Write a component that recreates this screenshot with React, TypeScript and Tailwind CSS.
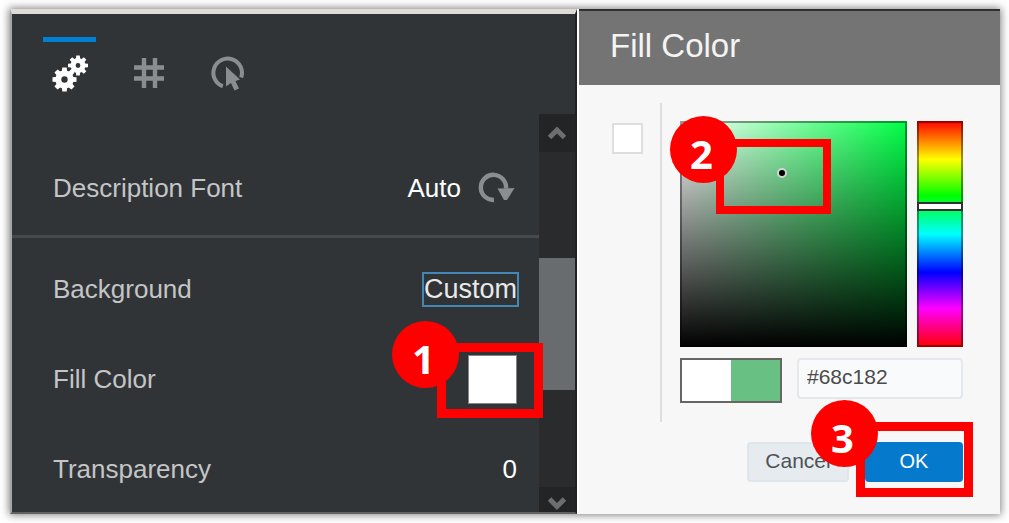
import type { ReactNode } from "react";

const TEETH = [0, 45, 90, 135, 180, 225, 270, 315];

function Gear({ x, y, body, outer, tooth, hole }: { x: number; y: number; body: number; outer: number; tooth: number; hole: number }) {
  return (
    <g transform={`translate(${x} ${y})`}>
      <circle r={(body + hole) / 2} fill="none" stroke="currentColor" strokeWidth={body - hole} />
      {TEETH.map((angle) => (
        <path
          key={angle}
          transform={`rotate(${angle})`}
          d={`M${-tooth} ${-body + 1}L${-tooth * 0.85} ${-outer}H${tooth * 0.85}L${tooth} ${-body + 1}Z`}
          fill="currentColor"
        />
      ))}
    </g>
  );
}

function GearsIcon() {
  return (
    <svg viewBox="0 0 36 38" className="h-[38px] w-9" aria-hidden="true">
      <Gear x={12.5} y={24.5} body={9.2} outer={12} tooth={2.6} hole={3.2} />
      <Gear x={26} y={10.5} body={7.4} outer={10} tooth={2.1} hole={2.4} />
    </svg>
  );
}

function HashIcon() {
  return (
    <svg viewBox="0 0 32 32" className="size-8" fill="none" stroke="currentColor" strokeWidth="4.4" aria-hidden="true">
      <path d="M11 1V31M22 1V31M1 10.5H31M1 21.5H31" />
    </svg>
  );
}

function PointerIcon() {
  return (
    <svg viewBox="0 0 36 38" className="h-[38px] w-9" aria-hidden="true">
      <path d="M12.8 32.3A14.3 14.3 0 1 1 31.2 23.5" fill="none" stroke="currentColor" strokeWidth="4" />
      <path d="M16 12.5L30 25.5L25.5 27L29 34.5L24.5 36.5L21 29L16 32.5Z" fill="currentColor" />
    </svg>
  );
}

function ResetIcon() {
  return (
    <svg viewBox="0 0 38 32" className="h-8 w-[38px]" aria-hidden="true">
      <path d="M17 28A12.6 12.6 0 1 1 29 16.5" fill="none" stroke="currentColor" strokeWidth="4.4" />
      <path d="M20.5 16.5L37.5 16L30 28H27Z" fill="currentColor" />
    </svg>
  );
}

function Chevron({ down = false }: { down?: boolean }) {
  return (
    <svg viewBox="0 0 18 16" className="h-4 w-[18px]" fill="none" stroke="currentColor" strokeWidth="5" aria-hidden="true">
      <path d={down ? "M1.5 3L9 10.5L16.5 3" : "M1.5 12.5L9 5L16.5 12.5"} />
    </svg>
  );
}

function StepBadge({ children, className }: { children: ReactNode; className: string }) {
  return (
    <span
      className={`pointer-events-none absolute flex size-[67px] items-center justify-center rounded-full bg-[#ff0000] pt-2 pr-1 font-['Noto_Sans',sans-serif] text-[40px] leading-[51px] font-bold text-white ${className}`}
    >
      {children}
    </span>
  );
}

function Row({ label, children }: { label: string; children: ReactNode }) {
  return (
    <div className="flex h-[90px] items-center justify-between pr-5 pl-[41px]">
      <span className="text-[26px] leading-8 text-[#c4c5c6]">{label}</span>
      {children}
    </div>
  );
}

function PropertiesPanel() {
  return (
    <section className="flex flex-col border-x-2 border-t-[5px] border-b-2 border-t-[#dedad5] border-r-[#202123] border-b-[#625f5f] border-l-[#a7a7a7] bg-[#313437]">
      <nav className="flex h-[100px] gap-[26px] pt-[23px] pl-[31px]" aria-label="Property groups">
        <button aria-label="General" className="flex h-[58px] w-[53px] items-center justify-center border-t-[5px] border-[#0080d2] pt-2.5 text-white">
          <GearsIcon />
        </button>
        <button aria-label="Values" className="flex h-[58px] w-[53px] items-center justify-center pt-3.5 text-[#8b8e91]">
          <HashIcon />
        </button>
        <button aria-label="Actions" className="flex h-[58px] w-[53px] items-center justify-center pt-3.5 text-[#8b8e91]">
          <PointerIcon />
        </button>
      </nav>
      <div className="flex flex-1">
        <div className="min-w-0 flex-1">
          <div className="border-b-[3px] border-[#47494c] pt-[29px] pb-[2px]">
            <Row label="Description Font">
              <div className="flex items-center gap-4 pr-1">
                <button className="text-[26px] leading-8 text-white">Auto</button>
                <button aria-label="Reset font" className="text-[#8b8e91]">
                  <ResetIcon />
                </button>
              </div>
            </Row>
          </div>
          <div className="-mb-0.5 pt-1.5">
            <Row label="Background">
              <button className="border-2 border-[#4486b4] text-[27px] leading-[31px] text-[#e9e9e9]">Custom</button>
            </Row>
            <Row label="Fill Color">
              <div className="relative mr-0.5 flex">
                <button aria-label="Choose fill color" className="size-[49px] border border-[#858585] bg-white" />
                <span className="pointer-events-none absolute top-[-12px] left-[-31px] h-[75px] w-[106px] border-[9px] border-[#ff0000]" />
                <StepBadge className="top-[-34px] left-[-76px]">1</StepBadge>
              </div>
            </Row>
            <Row label="Transparency">
              <button className="pr-0.5 text-[26px] leading-8 text-white">0</button>
            </Row>
          </div>
        </div>
        <div className="flex w-9 flex-col bg-[#292b2d] text-[#6e6d72]">
          <button aria-label="Scroll up" className="flex h-[38px] items-center justify-center bg-[#222426]">
            <Chevron />
          </button>
          <div className="mt-[106px] h-[132px] bg-[#696c6f]" />
          <button aria-label="Scroll down" className="mt-auto flex h-[25px] items-end justify-center bg-[#222426]">
            <Chevron down />
          </button>
        </div>
      </div>
    </section>
  );
}

function FillColorDialog() {
  return (
    <section className="flex flex-col border-l-2 border-white bg-[#f7f7f7]">
      <header className="flex h-[76px] items-center border-t-2 border-[#303030] bg-[#747474] pb-1 pl-[31px]">
        <h2 className="text-[33px] leading-10 text-[#f4f4f4]">Fill Color</h2>
      </header>
      <div className="flex pt-[18px] pr-[37px] pl-[33px]">
        <div className="h-[319px] w-[50px] shrink-0 border-r-2 border-[#dedede] pt-5">
          <button aria-label="White" className="block size-[31px] border-2 border-[#dedede] bg-white" />
        </div>
        <div className="min-w-0 flex-1 pt-[18px] pl-[18px]">
          <div className="flex h-[226px] gap-2.5">
            <div className="relative flex-1 border-2 border-[#00000066] bg-[#00ff46] bg-[linear-gradient(to_top,#000,transparent),linear-gradient(to_right,#fff,transparent)] bg-origin-border">
              <span className="absolute top-[45px] left-[95px] size-2.5 rounded-full border-2 border-[#d5d5d5] bg-black" />
              <span className="pointer-events-none absolute top-4 left-[34px] h-[75px] w-[115px] border-8 border-[#ff0000]" />
              <StepBadge className="top-[-7px] left-[-12px]">2</StepBadge>
            </div>
            <div className="relative w-[46px] border-2 border-[#00000066] bg-[linear-gradient(to_bottom,#f00,#ff0_17%,#0f0_33%,#0ff_50%,#00f_67%,#f0f_83%,#f00)] bg-origin-border">
              <input
                type="range"
                aria-label="Hue"
                min={0}
                max={360}
                defaultValue={137}
                className="absolute inset-0 h-full w-full appearance-none opacity-0 [writing-mode:vertical-lr]"
              />
              <span className="pointer-events-none absolute top-[79px] -left-0.5 h-[9px] w-[46px] border-2 border-[#303030] bg-white" />
            </div>
          </div>
          <div className="mt-[11px] flex items-start gap-[15px]">
            <div className="flex h-[45px] w-[102px] shrink-0 border-2 border-[#666]">
              <span className="flex-1 bg-white" />
              <span className="flex-1 bg-[#68c182]" />
            </div>
            <input
              aria-label="Hex color"
              defaultValue="#68c182"
              className="h-[41px] min-w-0 flex-1 rounded-sm border-2 border-[#e5e9ed] bg-[#f9fafb] px-2 pb-1 text-[21px] leading-6 text-[#4b4b4b]"
            />
          </div>
        </div>
      </div>
      <footer className="flex justify-end gap-4 pt-5 pr-[37px]">
        <button className="h-10 w-[102px] rounded-sm border-2 border-[#dfe5ea] bg-[#e6ebef] pb-0.5 text-[21px] leading-6 text-[#4e5357]">Cancel</button>
        <div className="relative">
          <button className="h-10 w-[98px] rounded-sm bg-[#0579cc] pb-0.5 text-[20px] leading-6 text-white">OK</button>
          <span className="pointer-events-none absolute top-[-20px] left-[-9px] h-[75px] w-[117px] border-[9px] border-[#ff0000]" />
          <StepBadge className="top-[-42px] left-[-54px]">3</StepBadge>
        </div>
      </footer>
    </section>
  );
}

export default function App() {
  return (
    <main className="min-h-screen overflow-hidden bg-white py-[9px] pr-[9px] pl-2.5 font-['Liberation_Sans',Arial,sans-serif]">
      <div className="grid grid-cols-[minmax(0,567fr)_minmax(0,423fr)] shadow-[0_0_8px_1px_#00000080]">
        <PropertiesPanel />
        <FillColorDialog />
      </div>
    </main>
  );
}
